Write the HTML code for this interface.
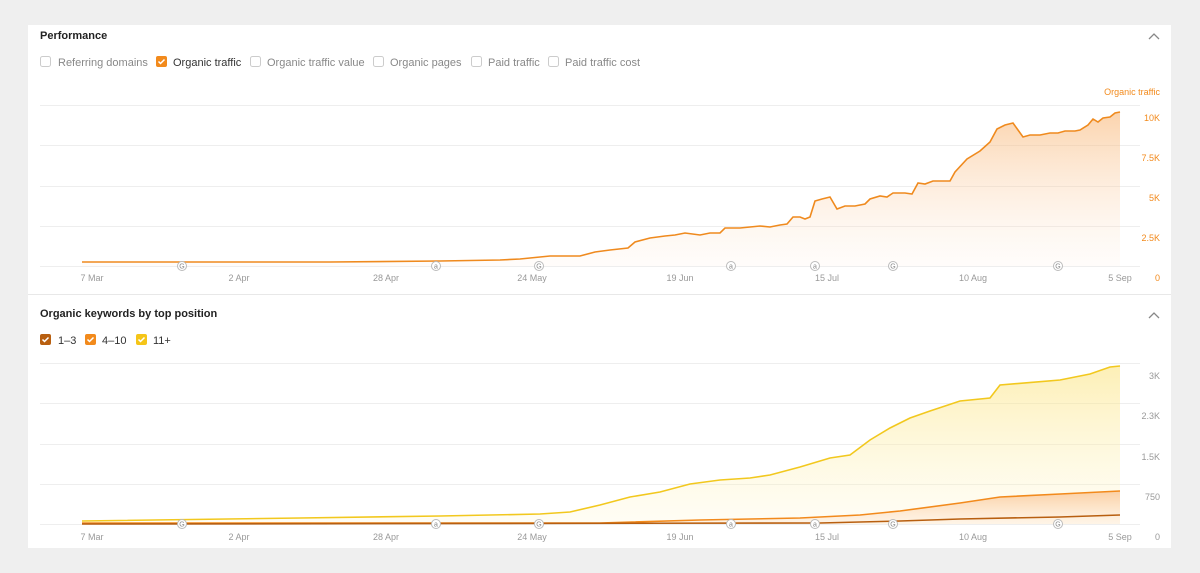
<!DOCTYPE html>
<html><head><meta charset="utf-8"><style>
body{margin:0;background:#efefef;width:1200px;height:573px;overflow:hidden;font-family:"Liberation Sans",Arial,sans-serif}
.card{position:absolute;left:28px;top:25px;width:1143px;height:523px;background:#fff}
svg{position:absolute;left:0;top:0}
</style></head><body>
<div class="card"></div>
<svg width="1200" height="573" font-family="Liberation Sans, Arial, sans-serif">
<defs>
<linearGradient id="g1" x1="0" y1="0" x2="0" y2="1"><stop offset="0" stop-color="#f8b06a" stop-opacity=".55"/><stop offset="1" stop-color="#fde6d2" stop-opacity=".1"/></linearGradient>
<linearGradient id="g2" x1="0" y1="0" x2="0" y2="1"><stop offset="0" stop-color="#fbe27a" stop-opacity=".55"/><stop offset="1" stop-color="#fff6cc" stop-opacity=".2"/></linearGradient>
<linearGradient id="g3" x1="0" y1="0" x2="0" y2="1"><stop offset="0" stop-color="#f7a35a" stop-opacity=".5"/><stop offset="1" stop-color="#fde0c8" stop-opacity=".3"/></linearGradient>
</defs>
<text x="40" y="39" font-size="11" font-weight="bold" fill="#222">Performance</text>
<path d="M1149 39l5-5 5 5" fill="none" stroke="#888" stroke-width="1.3"/>
<g font-size="11" fill="#888">
<rect x="40.5" y="56.5" width="10" height="10" rx="2" fill="#fff" stroke="#ccc"/><text x="58" y="66">Referring domains</text>
<rect x="156" y="56" width="11" height="11" rx="2" fill="#f28a1c"/><path d="M158.5 61.5l2 2 4-4" stroke="#fff" stroke-width="1.5" fill="none"/><text x="173" y="66" fill="#333">Organic traffic</text>
<rect x="250.5" y="56.5" width="10" height="10" rx="2" fill="#fff" stroke="#ccc"/><text x="267" y="66">Organic traffic value</text>
<rect x="373.5" y="56.5" width="10" height="10" rx="2" fill="#fff" stroke="#ccc"/><text x="390" y="66">Organic pages</text>
<rect x="471.5" y="56.5" width="10" height="10" rx="2" fill="#fff" stroke="#ccc"/><text x="488" y="66">Paid traffic</text>
<rect x="548.5" y="56.5" width="10" height="10" rx="2" fill="#fff" stroke="#ccc"/><text x="565" y="66">Paid traffic cost</text>
</g>
<text x="1160" y="95" font-size="9" fill="#f28a1c" text-anchor="end">Organic traffic</text>
<g stroke="#eee" stroke-width="1"><path d="M40 105.5H1140M40 145.5H1140M40 186.5H1140M40 226.5H1140M40 266.5H1140"/></g>
<g font-size="9" fill="#f28a1c" text-anchor="end"><text x="1160" y="121">10K</text><text x="1160" y="161">7.5K</text><text x="1160" y="201">5K</text><text x="1160" y="241">2.5K</text><text x="1160" y="281">0</text></g>
<path d="M82 262L180 262 330 262 440 261 500 260 520 259 540 257 550 256 580 256 595 252 610 250 628 248 635 242 650 238 665 236 675 235 685 233 700 235 710 233 720 233 725 228 740 228 760 226 770 227 780 225 787 224 793 217 800 217 805 219 810 217 815 201 822 199 830 197 837 209 845 206 855 206 865 204 870 199 880 196 887 197 893 193 905 193 912 194 918 183 925 184 933 181 950 181 955 172 967 159 980 151 990 142 997 129 1005 125 1013 123 1023 137 1030 135 1040 135 1050 133 1058 133 1065 131 1075 131 1080 130 1088 125 1093 119 1098 122 1103 118 1110 117 1115 113 1120 112L1120 266 82 266Z" fill="url(#g1)"/>
<path d="M82 262L180 262 330 262 440 261 500 260 520 259 540 257 550 256 580 256 595 252 610 250 628 248 635 242 650 238 665 236 675 235 685 233 700 235 710 233 720 233 725 228 740 228 760 226 770 227 780 225 787 224 793 217 800 217 805 219 810 217 815 201 822 199 830 197 837 209 845 206 855 206 865 204 870 199 880 196 887 197 893 193 905 193 912 194 918 183 925 184 933 181 950 181 955 172 967 159 980 151 990 142 997 129 1005 125 1013 123 1023 137 1030 135 1040 135 1050 133 1058 133 1065 131 1075 131 1080 130 1088 125 1093 119 1098 122 1103 118 1110 117 1115 113 1120 112" fill="none" stroke="#ef8a1e" stroke-width="1.6"/>
<g font-size="9" fill="#999" text-anchor="middle"><text x="92" y="281">7 Mar</text><text x="239" y="281">2 Apr</text><text x="386" y="281">28 Apr</text><text x="532" y="281">24 May</text><text x="680" y="281">19 Jun</text><text x="827" y="281">15 Jul</text><text x="973" y="281">10 Aug</text><text x="1120" y="281">5 Sep</text></g>
<g font-size="7" fill="#888" text-anchor="middle" stroke-width="1">
<g><circle cx="182" cy="266" r="4.5" fill="#fff" stroke="#bbb"/><text x="182" y="268.5">G</text></g>
<g><circle cx="436" cy="266" r="4.5" fill="#fff" stroke="#bbb"/><text x="436" y="268.5">a</text></g>
<g><circle cx="539" cy="266" r="4.5" fill="#fff" stroke="#bbb"/><text x="539" y="268.5">G</text></g>
<g><circle cx="731" cy="266" r="4.5" fill="#fff" stroke="#bbb"/><text x="731" y="268.5">a</text></g>
<g><circle cx="815" cy="266" r="4.5" fill="#fff" stroke="#bbb"/><text x="815" y="268.5">a</text></g>
<g><circle cx="893" cy="266" r="4.5" fill="#fff" stroke="#bbb"/><text x="893" y="268.5">G</text></g>
<g><circle cx="1058" cy="266" r="4.5" fill="#fff" stroke="#bbb"/><text x="1058" y="268.5">G</text></g>
</g>
<path d="M28 294.5H1171" stroke="#e8e8e8"/>
<text x="40" y="317" font-size="11" font-weight="bold" fill="#222">Organic keywords by top position</text>
<path d="M1149 318l5-5 5 5" fill="none" stroke="#888" stroke-width="1.3"/>
<g font-size="11" fill="#333">
<rect x="40" y="334" width="11" height="11" rx="2" fill="#b85f10"/><path d="M42.5 339.5l2 2 4-4" stroke="#fff" stroke-width="1.5" fill="none"/><text x="58" y="344">1–3</text>
<rect x="85" y="334" width="11" height="11" rx="2" fill="#f28a1c"/><path d="M87.5 339.5l2 2 4-4" stroke="#fff" stroke-width="1.5" fill="none"/><text x="102" y="344">4–10</text>
<rect x="136" y="334" width="11" height="11" rx="2" fill="#f5c518"/><path d="M138.5 339.5l2 2 4-4" stroke="#fff" stroke-width="1.5" fill="none"/><text x="153" y="344">11+</text>
</g>
<g stroke="#eee"><path d="M40 363.5H1140M40 403.5H1140M40 444.5H1140M40 484.5H1140M40 524.5H1140"/></g>
<g font-size="9" fill="#999" text-anchor="end"><text x="1160" y="379">3K</text><text x="1160" y="419">2.3K</text><text x="1160" y="460">1.5K</text><text x="1160" y="500">750</text><text x="1160" y="540">0</text></g>
<path d="M82 521L300 518 440 516 540 514 570 512 600 505 630 497 660 492 690 484 720 480 750 478 770 475 800 467 830 458 850 455 870 440 890 428 910 418 930 411 960 401 990 398 1000 385 1060 380 1090 374 1110 367 1120 366L1120 524 82 524Z" fill="url(#g2)"/>
<path d="M82 521L300 518 440 516 540 514 570 512 600 505 630 497 660 492 690 484 720 480 750 478 770 475 800 467 830 458 850 455 870 440 890 428 910 418 930 411 960 401 990 398 1000 385 1060 380 1090 374 1110 367 1120 366" fill="none" stroke="#f2c81e" stroke-width="1.6"/>
<path d="M82 523L600 523 700 520 800 518 860 515 900 511 960 503 1000 497 1060 494 1120 491L1120 524 82 524Z" fill="url(#g3)"/>
<path d="M82 523L600 523 700 520 800 518 860 515 900 511 960 503 1000 497 1060 494 1120 491" fill="none" stroke="#f28a1c" stroke-width="1.6"/>
<path d="M82 524L820 523 900 521 960 519 1060 517 1120 515" fill="none" stroke="#b85f10" stroke-width="1.6"/>
<g font-size="9" fill="#999" text-anchor="middle"><text x="92" y="540">7 Mar</text><text x="239" y="540">2 Apr</text><text x="386" y="540">28 Apr</text><text x="532" y="540">24 May</text><text x="680" y="540">19 Jun</text><text x="827" y="540">15 Jul</text><text x="973" y="540">10 Aug</text><text x="1120" y="540">5 Sep</text></g>
<g font-size="7" fill="#888" text-anchor="middle">
<g><circle cx="182" cy="524" r="4.5" fill="#fff" stroke="#bbb"/><text x="182" y="526.5">G</text></g>
<g><circle cx="436" cy="524" r="4.5" fill="#fff" stroke="#bbb"/><text x="436" y="526.5">a</text></g>
<g><circle cx="539" cy="524" r="4.5" fill="#fff" stroke="#bbb"/><text x="539" y="526.5">G</text></g>
<g><circle cx="731" cy="524" r="4.5" fill="#fff" stroke="#bbb"/><text x="731" y="526.5">a</text></g>
<g><circle cx="815" cy="524" r="4.5" fill="#fff" stroke="#bbb"/><text x="815" y="526.5">a</text></g>
<g><circle cx="893" cy="524" r="4.5" fill="#fff" stroke="#bbb"/><text x="893" y="526.5">G</text></g>
<g><circle cx="1058" cy="524" r="4.5" fill="#fff" stroke="#bbb"/><text x="1058" y="526.5">G</text></g>
</g>
</svg>
</body></html>
